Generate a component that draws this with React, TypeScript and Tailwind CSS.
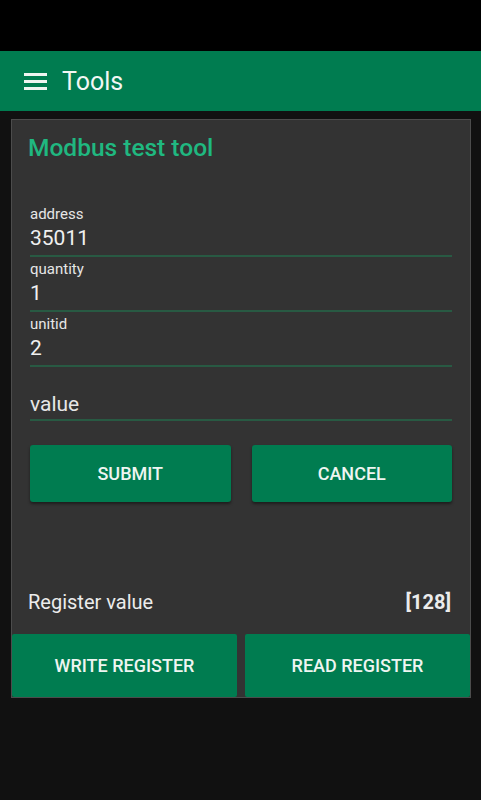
const fields = [
  { label: "address", value: "35011" },
  { label: "quantity", value: "1" },
  { label: "unitid", value: "2" },
];

function Field({ label, value }: { label: string; value: string }) {
  return (
    <div className="mt-[3px] first:mt-0">
      <div className="text-[15px] leading-[18px] text-[#e6e6e6]">{label}</div>
      <div className="mt-[2px] text-[21px] leading-[26px] text-[#f0f0f0]">{value}</div>
      <div className="mt-[4px] h-[2px] bg-[#285a43]" />
    </div>
  );
}

export default function App() {
  return (
    <div
      className="flex h-[800px] w-[481px] flex-col bg-[#111111]"
      style={{ fontFamily: "Roboto, 'Noto Sans', sans-serif" }}
    >
      {/* status bar */}
      <div className="h-[51px] bg-black" />

      {/* toolbar */}
      <div className="flex h-[60px] items-center bg-[#007c50] pl-[24px]">
        <div className="flex w-[23px] flex-col gap-[4px]">
          <span className="block h-[3px] bg-[#eef5f1]" />
          <span className="block h-[3px] bg-[#eef5f1]" />
          <span className="block h-[3px] bg-[#eef5f1]" />
        </div>
        <span className="ml-[15px] text-[25px] leading-none text-[#f2f7f4]">Tools</span>
      </div>

      {/* card */}
      <div className="ml-[11px] mt-[8px] flex h-[579px] w-[460px] flex-col border border-[#4c4c4c] bg-[#333333]">
        <div className="mt-[13px] pl-[16px] text-[24.5px] font-medium leading-[30px] text-[#20b880]">
          Modbus test tool
        </div>

        <div className="mt-[42px] pl-[18px] pr-[18px]">
          {fields.map((f) => (
            <Field key={f.label} label={f.label} value={f.value} />
          ))}

          <div className="mt-[24px] text-[21px] leading-[26px] text-[#e6e6e6]">value</div>
          <div className="mt-[2px] h-[2px] bg-[#285a43]" />

          <div className="mt-[24px] flex gap-[21px]">
            <button className="h-[57px] flex-1 rounded-[3px] bg-[#007c50] text-[18px] font-medium text-[#eef5f1] shadow-[0_2px_3px_rgba(0,0,0,0.45)]">
              SUBMIT
            </button>
            <button className="h-[57px] flex-1 rounded-[3px] bg-[#007c50] text-[18px] font-medium text-[#eef5f1] shadow-[0_2px_3px_rgba(0,0,0,0.45)]">
              CANCEL
            </button>
          </div>
        </div>

        <div className="mt-[86px] flex items-center justify-between pl-[16px] pr-[19px] text-[20px] leading-[28px] text-[#ececec]">
          <span>Register value</span>
          <span className="font-bold">[128]</span>
        </div>

        <div className="mt-auto flex gap-[8px]">
          <button className="h-[63px] flex-1 rounded-[2px] bg-[#007c50] text-[18px] font-medium text-[#eef5f1]">
            WRITE REGISTER
          </button>
          <button className="h-[63px] flex-1 rounded-[2px] bg-[#007c50] text-[18px] font-medium text-[#eef5f1]">
            READ REGISTER
          </button>
        </div>
      </div>
    </div>
  );
}
